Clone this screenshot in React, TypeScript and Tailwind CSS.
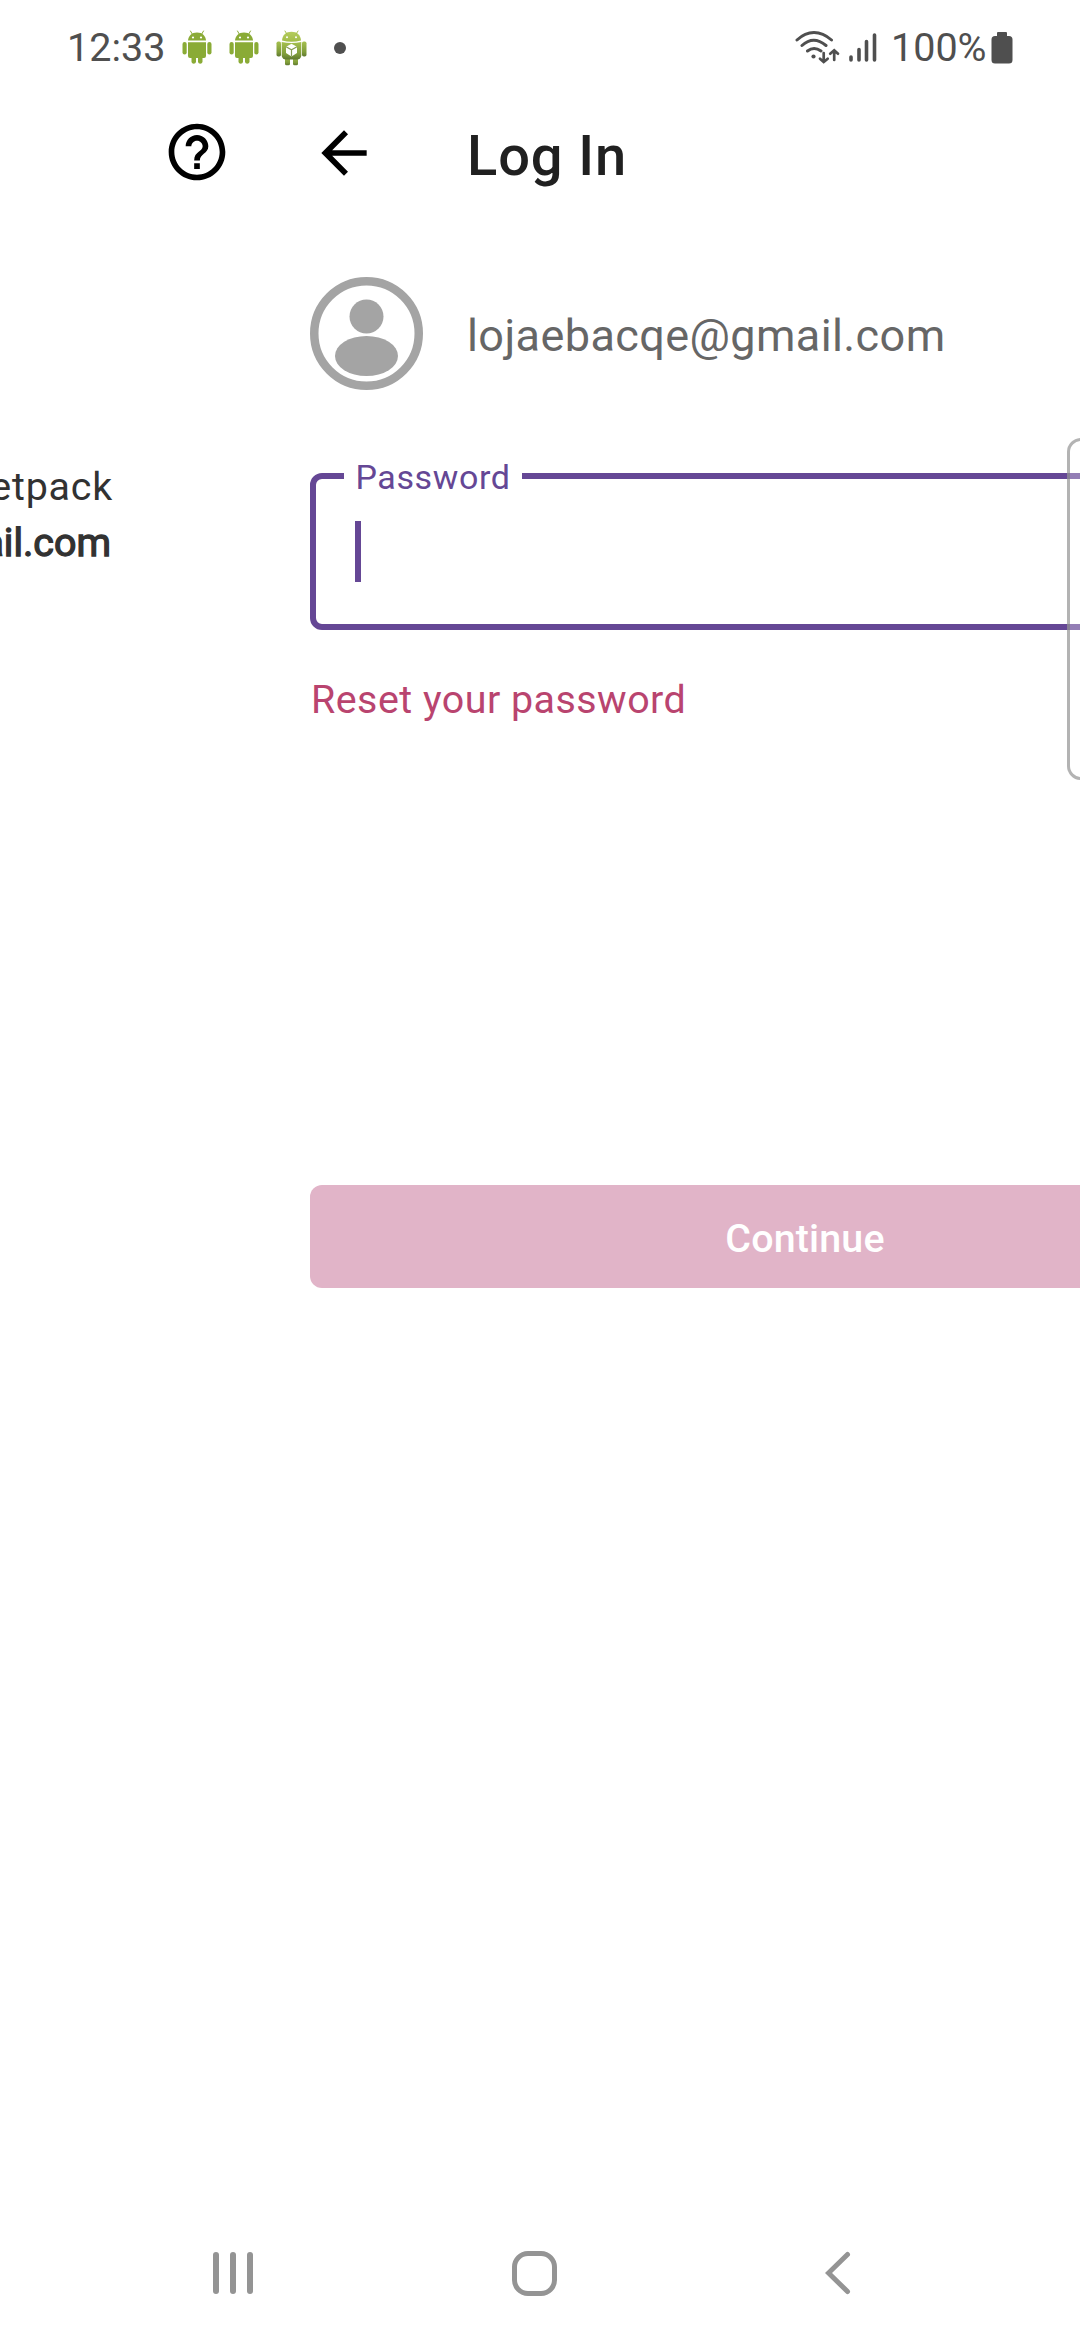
const W = "#4f4f4f";

function AndroidIcon() {
  return (
    <svg className="block h-[36px] w-[30px]" viewBox="0 0 30 36">
      <g fill="#8aab36">
        <path d="M6 10.5C6.5 6 9.500 2.500 15 2.500S23.500 6 24 10.500Z" />
        <path d="M6 12.200H24V26a2 2 0 0 1-2 2H20.500V32a2.300 2.300 0 0 1-4.500 0V28H14V32a2.300 2.300 0 0 1-4.500 0V28H8a2 2 0 0 1-2-2Z" />
        <rect x="0.500" y="12" width="4.200" height="12.500" rx="2.100" />
        <rect x="25.300" y="12" width="4.200" height="12.500" rx="2.100" />
      </g>
      <path d="M8.500 1l2 3.500M21.500 1l-2 3.500" stroke="#8aab36" strokeWidth="1" strokeLinecap="round" />
      <circle cx="11" cy="7.500" r="1.100" fill="#fff" />
      <circle cx="19" cy="7.500" r="1.100" fill="#fff" />
    </svg>
  );
}

function AndroidPackageIcon() {
  return (
    <svg className="block h-[36px] w-[31px]" viewBox="0 0 31 36">
      <defs>
        <linearGradient id="body" x1="0" y1="0" x2="0" y2="1">
          <stop offset="0" stopColor="#a5c04e" />
          <stop offset="0.700" stopColor="#7f9c3a" />
          <stop offset="1" stopColor="#5f7830" />
        </linearGradient>
        <linearGradient id="head" x1="0" y1="0" x2="0" y2="1">
          <stop offset="0" stopColor="#b4cc5c" />
          <stop offset="1" stopColor="#a2bd48" />
        </linearGradient>
      </defs>
      <g fill="url(#body)">
        <rect x="0.500" y="11.500" width="4.500" height="15" rx="1.800" />
        <rect x="26" y="11.500" width="4.500" height="15" rx="1.800" />
        <rect x="9" y="26" width="5" height="9.300" rx="1.500" />
        <rect x="17" y="26" width="5" height="9.300" rx="1.500" />
        <path d="M5.700 12Q15.500 14 25.300 12V26q-1 3.500-4 3.500H9.700q-3 0-4-3.500Z" />
      </g>
      <path d="M6 10.500C6.500 5 10 1.800 15.500 1.800S24.500 5 25 10.500Q15.500 13 6 10.500Z" fill="url(#head)" />
      <path d="M9 1l2 3.300M22 1l-2 3.300" stroke="#a5c04e" strokeWidth="1" strokeLinecap="round" />
      <circle cx="11" cy="7.300" r="1" fill="#fff" />
      <circle cx="20" cy="7.300" r="1" fill="#fff" />
      <path d="M15.500 13.800l5.500 3v6.200l-5.500 3.500-5.500-3.500v-6.200Z" fill="#fff" />
      <path d="M10 16.800l5.500 3 5.500-3M15.500 19.800v6.500" stroke="#879d55" strokeWidth="1.200" fill="none" />
    </svg>
  );
}

function StatusBar() {
  return (
    <header className="flex h-[96px] items-start pt-[30px] pl-[67px] text-[#4f4f4f]">
      <div className="flex w-[115px] shrink-0 text-[39.500px] leading-[36px]">12:33</div>
      <div className="flex h-[36px] shrink-0 gap-[17px]">
        <AndroidIcon />
        <AndroidIcon />
        <AndroidPackageIcon />
      </div>
      <div className="mt-[12px] ml-[27px] size-[12px] shrink-0 rounded-full bg-[#4f4f4f]" />
      <svg className="ml-[449px] h-[36px] w-[46px] shrink-0" viewBox="0 0 46 36" fill="none" stroke={W} strokeWidth="3" strokeLinecap="round">
        <path d="M2 10Q10 2.500 19 2.500T36.500 10M7 15.500Q18.500 5 31 15.500M12.500 21Q19 16 26 21" />
        <circle cx="18.500" cy="26.500" r="2.100" fill={W} stroke="none" />
        <path d="M28.700 23V31.500M25 28.700L28.700 32L32.700 28.700M39.200 30V21M35.200 23.700L39.200 20.200L43 23.700" strokeWidth="2.700" />
      </svg>
      <svg className="ml-[7px] h-[36px] w-[30px] shrink-0" viewBox="0 0 30 36" stroke={W} strokeWidth="3.600" strokeLinecap="round">
        <path d="M3 27V30M11 19.500V30M18.500 11.500V30M26.500 5V30" />
      </svg>
      <div className="ml-[13px] w-[100px] shrink-0 text-[39.500px] leading-[36px]">100%</div>
      <svg className="h-[34px] w-[22px] shrink-0" viewBox="0 0 22 34" fill={W}>
        <path d="M6 3.500V3Q6 2 7 2H15Q16 2 16 3V6H18Q21.500 6 21.500 9.500V30Q21.500 33.500 18 33.500H4Q.500 33.500 .500 30V9.500Q.500 6 4 6H6Z" />
      </svg>
    </header>
  );
}

function PreviousScreen() {
  return (
    <aside className="flex w-[256px] shrink-0 flex-col overflow-hidden">
      <div className="flex h-[112px] justify-end pt-[22px] pr-[25px]">
        <svg className="size-[68px]" viewBox="0 0 24 24">
          <path d="M11 18h2v-2h-2v2zm1-16C6.480 2 2 6.480 2 12s4.480 10 10 10 10-4.480 10-10S17.520 2 12 2zm0 18c-4.410 0-8-3.590-8-8s3.590-8 8-8 8 3.590 8 8-3.590 8-8 8zm0-14c-2.210 0-4 1.790-4 4h2c0-1.100.9-2 2-2s2 .9 2 2c0 2-3 1.750-3 5h2c0-2.250 3-2.500 3-5 0-2.210-1.790-4-4-4z" />
        </svg>
      </div>
      <div className="mt-[251px] flex w-[113px] flex-col items-end text-[39.400px] leading-[56px] whitespace-nowrap text-[#323232]">
        <p className="tracking-[0.800px]">etpack</p>
        <p className="pr-[2px] [-webkit-text-stroke:1.300px_#323232]">ail.com</p>
      </div>
    </aside>
  );
}

function LoginScreen() {
  return (
    <main className="flex w-[990px] shrink-0 flex-col">
      <div className="flex h-[112px] items-start pl-[54px]">
        <svg className="mt-[23px] size-[68px]" viewBox="0 0 24 24">
          <path d="M20 11H7.830l5.590-5.590L12 4l-8 8 8 8 1.410-1.410L7.830 13H20v-2z" />
        </svg>
        <h1 className="mt-[28px] ml-[89px] text-[56px] leading-[64px] font-medium tracking-[0.900px] text-[#202020]">Log In</h1>
      </div>
      <div className="flex h-[181px] items-start pt-[69px] pl-[54px]">
        <svg className="size-[113px]" viewBox="0 0 113 113" fill="#a4a4a4">
          <circle cx="56.500" cy="56.500" r="52.250" fill="none" stroke="#a4a4a4" strokeWidth="8.500" />
          <circle cx="56.500" cy="39.500" r="17" />
          <ellipse cx="56.500" cy="79" rx="31.500" ry="20" />
        </svg>
        <p className="mt-[29px] ml-[44px] text-[45px] leading-[60px] tracking-[0.400px] text-[#666]">lojaebacqe@gmail.com</p>
      </div>
      <section className="mt-[84px] ml-[54px] flex h-[157px] w-[990px] flex-col rounded-[12px] border-[6px] border-[#654795] pl-[28px]">
        <label className="mt-[-23px] flex h-[42px] w-[178px] items-center justify-center bg-white text-[34px] leading-[42px] tracking-[0.600px] text-[#654795]">Password</label>
        <span className="mt-[23px] ml-[11px] h-[61px] w-[6px] bg-[#654795]" />
      </section>
      <a className="mt-[46px] ml-[55px] text-[39.400px] leading-[48px] tracking-[0.480px] text-[#b9446f]">Reset your password</a>
      <button className="mt-[461px] ml-[54px] flex h-[103px] w-[990px] items-center justify-center rounded-[12px] bg-[#e1b4c8] pt-1 text-[39.400px] font-medium tracking-[0.150px] text-white">Continue</button>
    </main>
  );
}

function NavigationBar() {
  return (
    <nav className="flex h-[134px] items-center text-[#949494]">
      <div className="ml-[213px] flex gap-[11px]">
        <i className="h-[42px] w-[6px] rounded-full bg-[#949494]" />
        <i className="h-[42px] w-[6px] rounded-full bg-[#949494]" />
        <i className="h-[42px] w-[6px] rounded-full bg-[#949494]" />
      </div>
      <i className="ml-[259px] h-[45px] w-[45px] rounded-[16px] border-[5.500px] border-[#949494]" />
      <svg className="ml-[268px] h-[44px] w-[26px]" viewBox="0 0 26 44" fill="none" stroke="#949494" strokeWidth="5" strokeLinecap="round">
        <path d="M22.500 3.500L3.500 22L22.500 40.500" />
      </svg>
    </nav>
  );
}

export default function App() {
  return (
    <div className="relative flex h-[2340px] w-[1080px] flex-col overflow-hidden bg-white font-['Roboto',sans-serif]">
      <StatusBar />
      <div className="flex grow overflow-hidden">
        <PreviousScreen />
        <LoginScreen />
      </div>
      <NavigationBar />
      <div className="absolute top-[438px] left-[1067px] h-[342px] w-[40px] rounded-[14px] border-[3px] border-[#808080]/60 bg-white/30" />
    </div>
  );
}
